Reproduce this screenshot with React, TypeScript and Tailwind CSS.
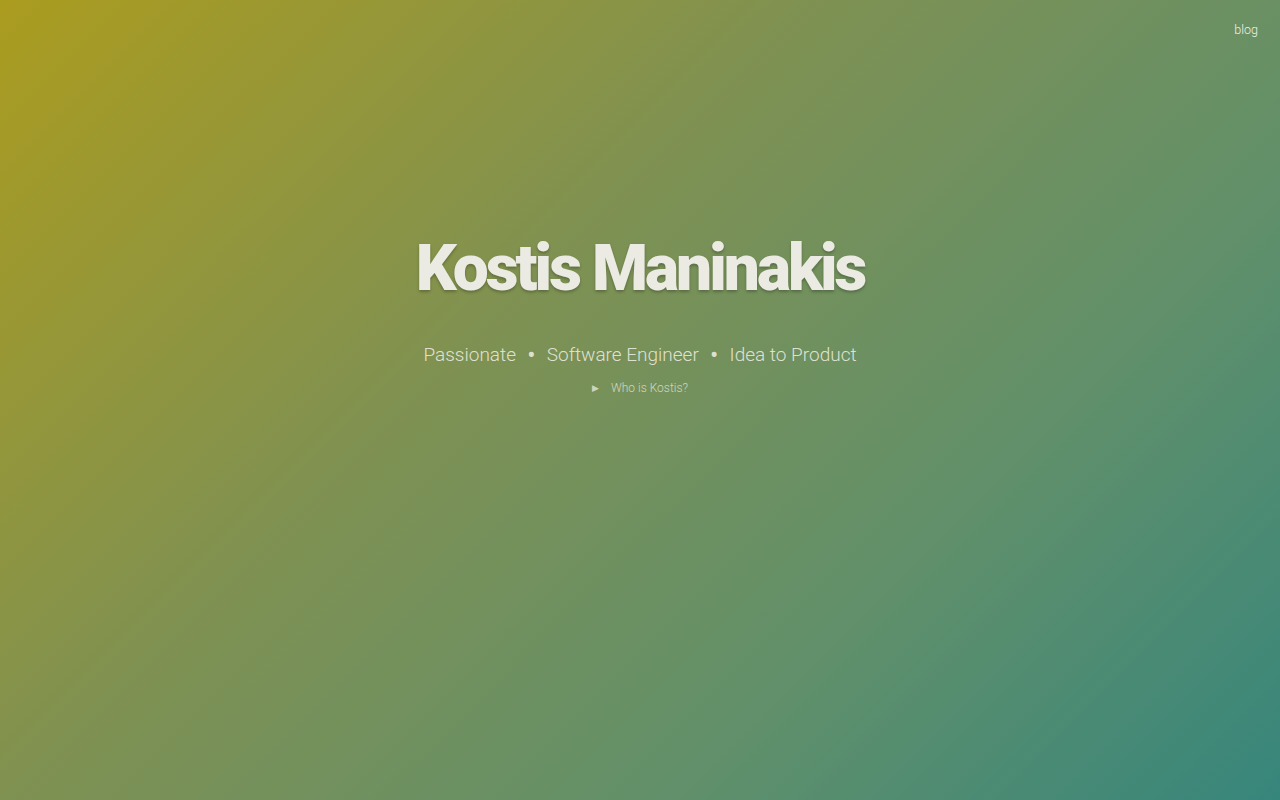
export default function App() {
  return (
    <div
      className="relative h-[800px] w-full overflow-hidden bg-[linear-gradient(135deg,#ab9c1f_0%,#7e9153_40%,#62906a_70%,#37867c_100%)] text-[#ecece4]"
      style={{ fontFamily: "Roboto, 'Liberation Sans', sans-serif" }}
    >
      <nav className="flex justify-end px-[22px] pt-[21px]">
        <a className="text-[12.5px] font-light text-[#f0f0e6]">blog</a>
      </nav>

      <header className="flex flex-col items-center pt-[197px]">
        <h1 className="text-[64px] font-black leading-none tracking-[-3px] text-[#ebebe3] [text-shadow:0_2px_3px_rgba(0,0,0,0.25)]">
          Kostis Maninakis
        </h1>
        <p className="mt-[42px] flex items-center gap-[11px] text-[19px] font-light leading-[24px] text-[#ecece0]/90">
          <span>Passionate</span>
          <span className="text-[27px] leading-[24px]">•</span>
          <span>Software Engineer</span>
          <span className="text-[27px] leading-[24px]">•</span>
          <span>Idea to Product</span>
        </p>
        <button className="mt-[13px] flex items-center gap-[12px] text-[12px] font-light leading-[16px] text-[#e6e8dc]/80">
          <span className="text-[9px]">▶</span>
          <span>Who is Kostis?</span>
        </button>
      </header>
    </div>
  );
}
